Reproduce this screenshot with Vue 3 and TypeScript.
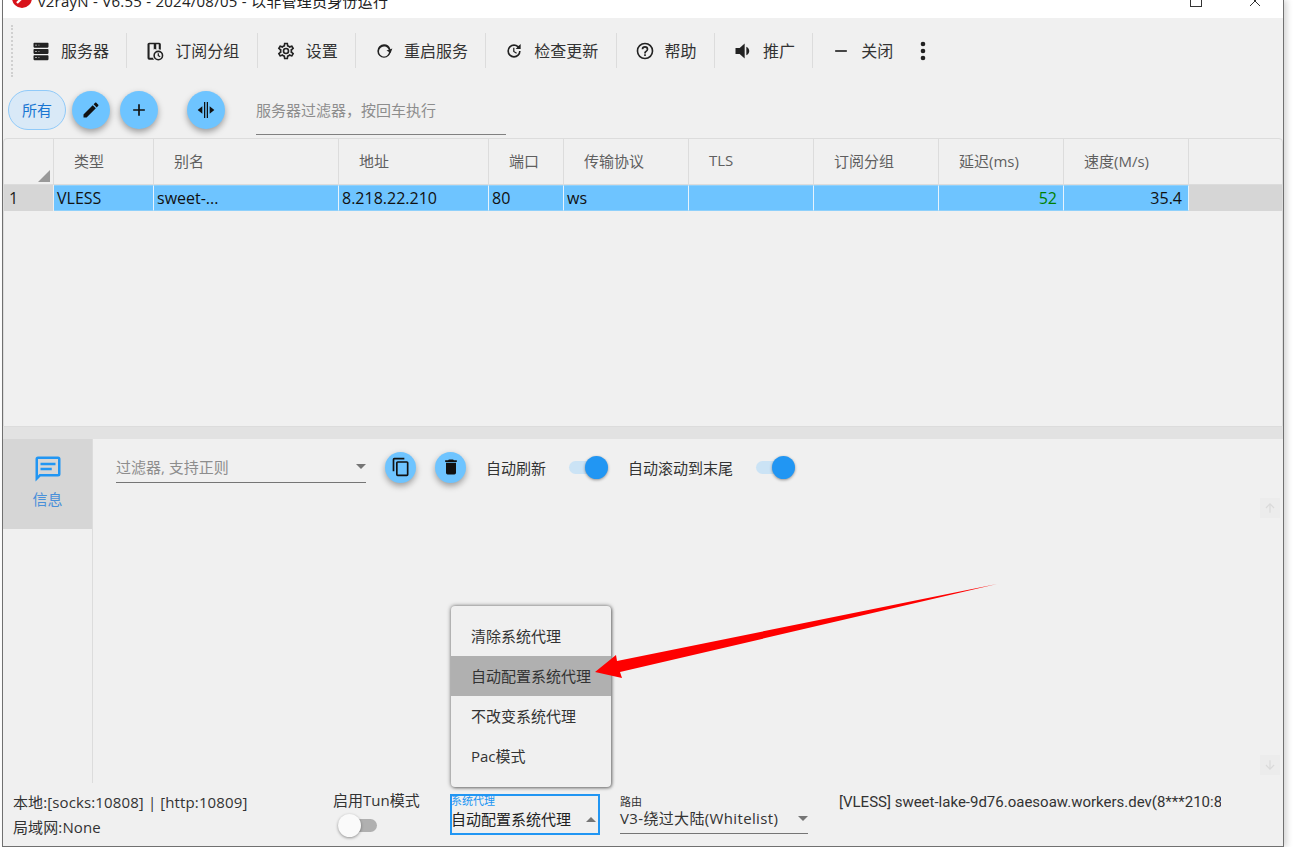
<template>
  <div class="page">
    <div class="window">
      <div class="titlebar">
        <svg class="logo" viewBox="0 0 24 24">
          <circle cx="12" cy="12" r="12" fill="#d8121a" />
          <path d="M5 17 L17 5 L19 7 L7 19 Z" fill="#fff" />
        </svg>
        <span class="title">v2rayN - V6.55 - 2024/08/05 - 以非管理员身份运行</span>
        <span class="max-btn"></span>
        <svg class="close-btn" viewBox="0 0 12 12"><path d="M1 1 L11 11 M11 1 L1 11" stroke="#333" stroke-width="1" fill="none" /></svg>
      </div>

      <div class="toolbar">
        <div class="grip"></div>
        <template v-for="(item, i) in toolItems" :key="item.label">
          <div class="tool-item">
            <svg class="tool-icon" viewBox="0 0 24 24"><path :d="item.icon" /></svg>
            <span>{{ item.label }}</span>
          </div>
          <div v-if="i < toolItems.length - 1" class="tool-sep"></div>
        </template>
        <svg class="tool-more" viewBox="0 0 24 24"><path d="M12,16A2,2 0 0,1 14,18A2,2 0 0,1 12,20A2,2 0 0,1 10,18A2,2 0 0,1 12,16M12,10A2,2 0 0,1 14,12A2,2 0 0,1 12,14A2,2 0 0,1 10,12A2,2 0 0,1 12,10M12,4A2,2 0 0,1 14,6A2,2 0 0,1 12,8A2,2 0 0,1 10,6A2,2 0 0,1 12,4Z" /></svg>
      </div>

      <div class="filter-row">
        <span class="chip">所有</span>
        <button class="fab fab-first">
          <svg viewBox="0 0 24 24"><path d="M20.71,7.04C21.1,6.65 21.1,6 20.71,5.63L18.37,3.29C18,2.9 17.35,2.9 16.96,3.29L15.12,5.12L18.87,8.87M3,17.25V21H6.75L17.81,9.93L14.06,6.18L3,17.25Z" /></svg>
        </button>
        <button class="fab">
          <svg viewBox="0 0 24 24"><path d="M19,13H13V19H11V13H5V11H11V5H13V11H19V13Z" /></svg>
        </button>
        <button class="fab fab-far">
          <svg viewBox="0 0 24 24"><path d="M9.6,2.5H11.1V21.5H9.6V2.5M12.9,2.5H14.4V21.5H12.9V2.5M7.6,7.5V16.5L2,12L7.6,7.5M16.4,7.5L22,12L16.4,16.5V7.5Z" /></svg>
        </button>
        <div class="server-filter">服务器过滤器，按回车执行</div>
      </div>

      <div class="grid">
        <div class="grid-row grid-head">
          <div class="corner"><span class="corner-mark"></span></div>
          <div v-for="col in columns" :key="col" class="head-cell">{{ col }}</div>
          <div class="head-rest"></div>
        </div>
        <div class="grid-row grid-data">
          <div class="row-no">1</div>
          <div v-for="cell in rowCells" :key="cell.key" class="data-cell" :class="cell.cls">{{ cell.text }}</div>
          <div class="row-rest"></div>
        </div>
      </div>

      <div class="splitter"></div>

      <div class="log-panel">
        <div class="side-tabs">
          <div class="side-tab">
            <svg viewBox="0 0 24 24"><path d="M20,2H4A2,2 0 0,0 2,4V22L6,18H20A2,2 0 0,0 22,16V4A2,2 0 0,0 20,2M20,16H5.2L4,17.2V4H20V16M6,7H18V9H6V7M6,11H15V13H6V11Z" /></svg>
            <span>信息</span>
          </div>
        </div>
        <div class="log-main">
          <div class="log-tools">
            <div class="log-filter">
              <span>过滤器, 支持正则</span>
              <i class="caret"></i>
            </div>
            <button class="fab fab-small">
              <svg viewBox="0 0 24 24"><path d="M16,1H4A2,2 0 0,0 2,3V17H4V3H16V1M19,5H8A2,2 0 0,0 6,7V21A2,2 0 0,0 8,23H19A2,2 0 0,0 21,21V7A2,2 0 0,0 19,5M19,21H8V7H19V21Z" /></svg>
            </button>
            <button class="fab fab-small">
              <svg viewBox="0 0 24 24"><path d="M19,4H15.5L14.5,3H9.5L8.5,4H5V6H19M6,19A2,2 0 0,0 8,21H16A2,2 0 0,0 18,19V7H6V19Z" /></svg>
            </button>
            <span class="log-label">自动刷新</span>
            <span class="switch on"></span>
            <span class="log-label">自动滚动到末尾</span>
            <span class="switch on"></span>
          </div>
          <div class="log-scroll">
            <div class="scroll-col">
              <span class="scroll-btn"><svg viewBox="0 0 24 24"><path d="M12 20 V5 M5 12 L12 5 L19 12" /></svg></span>
              <span class="scroll-btn"><svg viewBox="0 0 24 24"><path d="M12 4 V19 M5 12 L12 19 L19 12" /></svg></span>
            </div>
          </div>
        </div>
      </div>

      <div class="statusbar">
        <div class="status-info">
          <div>本地:[socks:10808] | [http:10809]</div>
          <div>局域网:None</div>
        </div>
        <div class="tun">
          <span>启用Tun模式</span>
          <span class="switch off"></span>
        </div>
        <div class="proxy-box">
          <span class="proxy-label">系统代理</span>
          <span class="proxy-value">自动配置系统代理</span>
          <i class="caret caret-up"></i>
        </div>
        <div class="route-box">
          <span class="route-label">路由</span>
          <div class="route-value">
            <span>V3-绕过大陆(Whitelist)</span>
            <i class="caret"></i>
          </div>
        </div>
        <div class="server-text">[VLESS] sweet-lake-9d76.oaesoaw.workers.dev(8***210:8080)</div>
      </div>

      <div class="popup">
        <div v-for="opt in proxyOptions" :key="opt" class="popup-item" :class="{ active: opt === current }">{{ opt }}</div>
      </div>
    </div>

    <svg class="arrow" viewBox="0 0 1297 847">
      <polygon points="997,584 617,661 616,655 595,672 622,678 620,672" fill="#fe0000" />
    </svg>
  </div>
</template>

<script setup lang="ts">
const toolItems = [
  { label: '服务器', icon: 'M4,2H20A1,1 0 0,1 21,3V7A1,1 0 0,1 20,8H4A1,1 0 0,1 3,7V3A1,1 0 0,1 4,2M4,9.5H20A1,1 0 0,1 21,10.5V14.5A1,1 0 0,1 20,15.5H4A1,1 0 0,1 3,14.5V10.5A1,1 0 0,1 4,9.5M4,17H20A1,1 0 0,1 21,18V22A1,1 0 0,1 20,23H4A1,1 0 0,1 3,22V18A1,1 0 0,1 4,17M5,4.5V5.5H7V4.5H5M9,4.5V5.5H10V4.5H9M5,12V13H7V12H5M9,12V13H10V12H9M5,19.5V20.5H7V19.5H5M9,19.5V20.5H10V19.5H9Z' },
  { label: '订阅分组', icon: 'M5,2H17A2,2 0 0,1 19,4V10.4A7,7 0 0,0 16.5,10V4H13.5V10.5L11.8,9.4L10.5,10.5V4H5.5V20H9.5A7,7 0 0,0 10.8,22.5H5A2,2 0 0,1 3,20.5V4A2,2 0 0,1 5,2M16,11.5A6,6 0 1,1 10,17.5A6,6 0 0,1 16,11.5M16,13.4A4.1,4.1 0 1,0 20.1,17.5A4.1,4.1 0 0,0 16,13.4M15.2,14.8H16.7V17.2L18.6,18.3L17.9,19.5L15.2,17.9V14.8Z' },
  { label: '设置', icon: 'M12,8A4,4 0 0,1 16,12A4,4 0 0,1 12,16A4,4 0 0,1 8,12A4,4 0 0,1 12,8M12,10A2,2 0 0,0 10,12A2,2 0 0,0 12,14A2,2 0 0,0 14,12A2,2 0 0,0 12,10M10,22C9.75,22 9.54,21.82 9.5,21.58L9.13,18.93C8.5,18.68 7.96,18.34 7.44,17.94L4.95,18.95C4.73,19.03 4.46,18.95 4.34,18.73L2.34,15.27C2.21,15.05 2.27,14.78 2.46,14.63L4.57,12.97L4.5,12L4.57,11L2.46,9.37C2.27,9.22 2.21,8.95 2.34,8.73L4.34,5.27C4.46,5.05 4.73,4.96 4.95,5.05L7.44,6.05C7.96,5.66 8.5,5.32 9.13,5.07L9.5,2.42C9.54,2.18 9.75,2 10,2H14C14.25,2 14.46,2.18 14.5,2.42L14.87,5.07C15.5,5.32 16.04,5.66 16.56,6.05L19.05,5.05C19.27,4.96 19.54,5.05 19.66,5.27L21.66,8.73C21.79,8.95 21.73,9.22 21.54,9.37L19.43,11L19.5,12L19.43,13L21.54,14.63C21.73,14.78 21.79,15.05 21.66,15.27L19.66,18.73C19.54,18.95 19.27,19.04 19.05,18.95L16.56,17.95C16.04,18.34 15.5,18.68 14.87,18.93L14.5,21.58C14.46,21.82 14.25,22 14,22H10M11.25,4L10.88,6.61C9.68,6.86 8.62,7.5 7.85,8.39L5.44,7.35L4.69,8.65L6.8,10.2C6.4,11.37 6.4,12.64 6.8,13.8L4.68,15.36L5.43,16.66L7.86,15.62C8.63,16.5 9.68,17.14 10.87,17.38L11.24,20H12.76L13.13,17.39C14.32,17.14 15.37,16.5 16.14,15.62L18.57,16.66L19.32,15.36L17.2,13.81C17.6,12.64 17.6,11.37 17.2,10.2L19.31,8.65L18.56,7.35L16.15,8.39C15.38,7.5 14.32,6.86 13.12,6.62L12.75,4H11.25Z' },
  { label: '重启服务', icon: 'M12,4A8,8 0 0,1 19.7,9.8L22,9L20,14.5L15,11.5L17.7,10.6A6,6 0 1,0 18,12H20A8,8 0 1,1 12,4Z' },
  { label: '检查更新', icon: 'M12,4A8,8 0 1,0 20,12H18A6,6 0 1,1 12,6C13.5,6 14.9,6.6 16,7.5L14,9.5H20V3.5L17.4,6.1A8,8 0 0,0 12,4M11,8H12.5V12.2L15.5,14L14.7,15.2L11,13V8Z' },
  { label: '帮助', icon: 'M11,18H13V16H11V18M12,2A10,10 0 0,0 2,12A10,10 0 0,0 12,22A10,10 0 0,0 22,12A10,10 0 0,0 12,2M12,20C7.59,20 4,16.41 4,12C4,7.59 7.59,4 12,4C16.41,4 20,7.59 20,12C20,16.41 16.41,20 12,20M12,6A4,4 0 0,0 8,10H10A2,2 0 0,1 12,8A2,2 0 0,1 14,10C14,12 11,11.75 11,15H13C13,12.75 16,12.5 16,10A4,4 0 0,0 12,6Z' },
  { label: '推广', icon: 'M3,8.5V15.5H8L14,21V3L8,8.5H3M19.5,12C19.5,9.7 18.2,7.8 16,6.8V17.2C18.2,16.2 19.5,14.3 19.5,12Z' },
  { label: '关闭', icon: 'M19,13H5V11H19V13Z' },
]

const columns = ['类型', '别名', '地址', '端口', '传输协议', 'TLS', '订阅分组', '延迟(ms)', '速度(M/s)']

const rowCells = [
  { key: 'type', text: 'VLESS', cls: '' },
  { key: 'name', text: 'sweet-...', cls: '' },
  { key: 'addr', text: '8.218.22.210', cls: '' },
  { key: 'port', text: '80', cls: '' },
  { key: 'net', text: 'ws', cls: '' },
  { key: 'tls', text: '', cls: '' },
  { key: 'sub', text: '', cls: '' },
  { key: 'delay', text: '52', cls: 'num good' },
  { key: 'speed', text: '35.4', cls: 'num' },
]

const proxyOptions = ['清除系统代理', '自动配置系统代理', '不改变系统代理', 'Pac模式']
const current = '自动配置系统代理'
</script>

<style>
html, body { margin: 0; background: #fff; }
</style>

<style scoped>
* { box-sizing: border-box; }

.page {
  position: relative;
  width: 1297px;
  height: 847px;
  overflow: hidden;
  background: #fff;
  padding-left: 2px;
  font-family: "Open Sans", "Noto Sans CJK SC", sans-serif;
  color: #222;
}

.window {
  position: relative;
  width: 1282px;
  height: 847px;
  display: flex;
  flex-direction: column;
  background: #f0f0f0;
  border-left: 1px solid #707070;
  border-right: 1px solid #707070;
  border-bottom: 1px solid #707070;
  box-shadow: 3px 0 6px rgba(0, 0, 0, 0.16);
}

.titlebar {
  height: 18px;
  flex: none;
  background: #fff;
  display: flex;
  align-items: flex-end;
  overflow: hidden;
  padding-left: 9px;
}
.logo { width: 20px; height: 20px; flex: none; margin-bottom: 10px; }
.title { font-size: 15px; letter-spacing: 0.25px; line-height: 22px; margin-left: 6px; margin-bottom: 6px; white-space: nowrap; color: #222; flex: 1; }
.max-btn { width: 12px; height: 12px; border: 1px solid #333; margin-bottom: 11px; }
.close-btn { width: 12px; height: 12px; margin-left: 47px; margin-right: 22px; margin-bottom: 11px; }

.toolbar {
  height: 66px;
  flex: none;
  display: flex;
  align-items: center;
  padding-left: 8px;
  padding-bottom: 1px;
}
.grip {
  width: 2px;
  height: 52px;
  border-left: 2px dotted #d0d0d0;
}
.tool-item {
  display: flex;
  align-items: center;
  gap: 10px;
  padding: 0 17.3px 0 18px;
  font-size: 16px;
  line-height: 22px;
  white-space: nowrap;
  color: #333;
}
.tool-icon { width: 20px; height: 20px; flex: none; fill: #222; }
.tool-sep { width: 1px; height: 35px; background: #dcdcdc; flex: none; }
.tool-more { width: 28px; height: 28px; fill: #222; margin-left: -2px; }

.filter-row {
  height: 54px;
  flex: none;
  display: flex;
  align-items: center;
  padding-left: 5px;
  padding-bottom: 2px;
}
.chip {
  width: 58px;
  height: 40px;
  border: 1px solid #90caf9;
  border-radius: 20px;
  background: #d9e9f7;
  color: #1976d2;
  font-size: 15px;
  padding-bottom: 2px;
  display: flex;
  align-items: center;
  justify-content: center;
}
.fab {
  width: 38px;
  height: 38px;
  border: none;
  border-radius: 50%;
  background: #6ec4ff;
  box-shadow: 0 3px 6px rgba(0, 0, 0, 0.35);
  margin-left: 10px;
  padding: 0;
  display: flex;
  align-items: center;
  justify-content: center;
  flex: none;
}
.fab svg { width: 20px; height: 20px; fill: #111; }
.fab-first { margin-left: 6px; }
.fab-far { margin-left: 29px; }
.server-filter {
  width: 250px;
  height: 48px;
  margin-left: 31px;
  align-self: flex-start;
  margin-top: 3px;
  padding-bottom: 3px;
  border-bottom: 1px solid #808080;
  font-size: 15px;
  color: #8d8d8d;
  display: flex;
  align-items: center;
}

.grid {
  height: 289px;
  flex: none;
  border: 1px solid #dcdcdc;
  border-radius: 4px 4px 0 0;
  overflow: hidden;
}
.grid-row {
  display: grid;
  grid-template-columns: 50px 100px 185px 150px 75px 125px 125px 125px 125px 125px 1fr;
}
.grid-head { height: 46px; border-bottom: 1px solid #dcdcdc; }
.corner { position: relative; border-right: 1px solid #dcdcdc; }
.corner-mark {
  position: absolute;
  right: 3px;
  bottom: 2px;
  width: 0;
  height: 0;
  border-left: 12px solid transparent;
  border-bottom: 12px solid #999;
}
.head-cell {
  border-right: 1px solid #dcdcdc;
  padding-left: 20px;
  padding-bottom: 3px;
  font-size: 15px;
  color: #5f5f5f;
  display: flex;
  align-items: center;
}
.grid-data { height: 26px; }
.row-no {
  background: #d6d6d6;
  padding-left: 5px;
  font-size: 16px;
  display: flex;
  align-items: center;
  border-right: 1px solid #eee;
}
.data-cell {
  background: #6ec4ff;
  border: 1px solid #8ed0fb;
  border-left: none;
  border-right: 1px solid #e6f3fc;
  padding: 0 6px 0 3px;
  font-size: 16px;
  color: #111;
  display: flex;
  align-items: center;
}
.data-cell.num { justify-content: flex-end; }
.data-cell.good { color: #008000; }
.row-rest { background: #d6d6d6; }

.splitter { height: 12px; flex: none; background: #e2e2e2; }

.log-panel { flex: 1; min-height: 0; display: flex; }
.side-tabs { width: 90px; flex: none; border-right: 1px solid #dcdcdc; }
.side-tab {
  height: 90px;
  background: #d6d6d6;
  color: #4a90d9;
  font-size: 15px;
  display: flex;
  flex-direction: column;
  align-items: center;
  padding-top: 15px;
  gap: 4px;
}
.side-tab svg { width: 30px; height: 30px; fill: #2196f3; }

.log-main { flex: 1; min-width: 0; display: flex; flex-direction: column; padding-left: 23px; }
.log-tools { height: 59px; flex: none; display: flex; align-items: center; padding-bottom: 3px; }
.log-filter {
  width: 250px;
  height: 30px;
  border-bottom: 1px solid #757575;
  margin-top: 1px;
  padding-bottom: 2px;
  font-size: 15px;
  color: #8d8d8d;
  display: flex;
  align-items: center;
  justify-content: space-between;
}
.caret {
  width: 0;
  height: 0;
  border-left: 5px solid transparent;
  border-right: 5px solid transparent;
  border-top: 5px solid #757575;
  flex: none;
}
.fab-small { width: 31px; height: 31px; margin-left: 19px; }
.log-label { font-size: 15px; margin-left: 20px; color: #333; white-space: nowrap; }

.switch {
  position: relative;
  width: 39px;
  height: 13px;
  margin-left: 23px;
  border-radius: 7px;
  background: #cbe3f5;
  flex: none;
}
.switch::after {
  content: "";
  position: absolute;
  top: -5px;
  width: 23px;
  height: 23px;
  border-radius: 50%;
  box-shadow: 0 1px 3px rgba(0, 0, 0, 0.4);
}
.switch.on::after { right: 0; background: #2196f3; }
.switch.off { background: #b0b0b0; margin-left: 5px; }
.switch.off::after { left: 0; background: #fafafa; }

.log-scroll { flex: 1; min-height: 0; display: flex; justify-content: flex-end; padding: 0 3px 8px 0; }
.scroll-col { display: flex; flex-direction: column; justify-content: space-between; }
.scroll-btn {
  width: 20px;
  height: 20px;
  background: #ececec;
  display: flex;
  align-items: center;
  justify-content: center;
}
.scroll-btn svg { width: 14px; height: 14px; fill: none; stroke: #dadada; stroke-width: 2; }

.statusbar {
  height: 63px;
  flex: none;
  display: flex;
  font-size: 15px;
  color: #333;
  padding-left: 10px;
  position: relative;
}
.status-info {
  width: 320px;
  flex: none;
  padding-top: 9px;
  display: flex;
  flex-direction: column;
  gap: 5px;
  line-height: 20px;
  letter-spacing: 0.12px;
}
.tun {
  width: 117px;
  flex: none;
  padding-top: 7px;
  display: flex;
  flex-direction: column;
  gap: 9px;
  line-height: 20px;
  white-space: nowrap;
}
.proxy-box {
  position: relative;
  width: 150px;
  height: 41px;
  margin-top: 11px;
  border: 2px solid #2196f3;
  flex: none;
  display: flex;
  flex-direction: column;
  line-height: 1;
}
.proxy-label { font-size: 11px; color: #2196f3; margin-top: -1px; margin-left: -1px; height: 13px; }
.proxy-value { font-size: 15px; margin-top: 4px; margin-left: -1px; color: #222; white-space: nowrap; }
.caret-up {
  position: absolute;
  right: 2px;
  top: 21px;
  border-top: none;
  border-bottom: 5px solid #757575;
}
.route-box {
  width: 188px;
  height: 40px;
  margin: 11px 0 0 20px;
  border-bottom: 1px solid #757575;
  flex: none;
  display: flex;
  flex-direction: column;
}
.route-label { font-size: 11px; line-height: 13px; margin-top: 1px; color: #333; }
.route-value {
  display: flex;
  align-items: center;
  justify-content: space-between;
  font-size: 15px;
  line-height: 20px;
  letter-spacing: 0.35px;
  white-space: nowrap;
}
.server-text {
  width: 382px;
  margin-left: 31px;
  padding-top: 9px;
  font-family: Roboto, "Noto Sans CJK SC", sans-serif;
  line-height: 20px;
  white-space: nowrap;
  overflow: hidden;
  color: #333;
}

.popup {
  position: absolute;
  left: 448px;
  top: 606px;
  width: 160px;
  height: 181px;
  padding: 10px 0 0;
  background: #f0f0f0;
  border-radius: 4px;
  box-shadow: 0 0 4px rgba(0, 0, 0, 0.55), 1px 1px 3px rgba(0, 0, 0, 0.3);
}
.popup-item {
  height: 40px;
  padding-left: 20px;
  padding-bottom: 2px;
  font-size: 15px;
  color: #333;
  display: flex;
  align-items: center;
}
.popup-item.active { background: #b0b0b0; }

.arrow {
  position: absolute;
  left: 0;
  top: 0;
  width: 1297px;
  height: 847px;
  pointer-events: none;
}
</style>
